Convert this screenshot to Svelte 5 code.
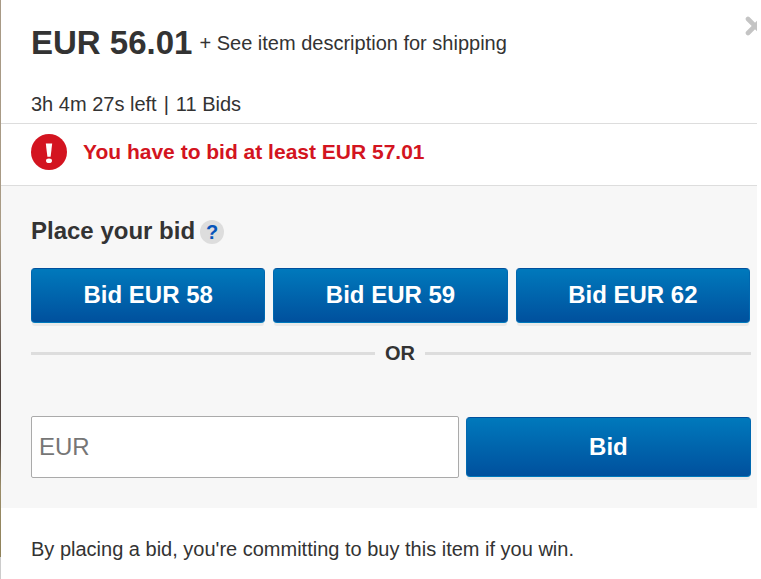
<script lang="ts">
	const currency = 'EUR';
	const quickBids = [58, 59, 62];

	let amount = '';
</script>

<main class="bid-layer">
	<header class="summary">
		<button class="close" type="button" aria-label="Close">
			<svg width="12" height="20" viewBox="0 0 12 20" aria-hidden="true">
				<path d="M3 3 17 17M17 3 3 17" stroke="#c4c4c4" stroke-width="4.6" stroke-linecap="round" />
			</svg>
		</button>
		<p class="price-row">
			<strong class="price">{currency} 56.01</strong>
			<span>+ See item description for shipping</span>
		</p>
		<p class="status">
			<span>3h 4m 27s left</span><span>|</span><span>11 Bids</span>
		</p>
	</header>

	<div class="error" role="alert">
		<svg width="36" height="36" viewBox="0 0 36 36" aria-hidden="true">
			<circle cx="18" cy="18" r="18" fill="#d31420" />
			<path d="M14.8 9.6h6.4l-1.6 13.2h-3.2z" fill="#fff" />
			<ellipse cx="18" cy="26.8" rx="3" ry="2.3" fill="#fff" />
		</svg>
		<span>You have to bid at least {currency} 57.01</span>
	</div>

	<section class="panel">
		<div class="heading">
			<h1>Place your bid</h1>
			<button class="help" type="button" aria-label="Help with placing a bid">?</button>
		</div>
		<div class="quick-bids">
			{#each quickBids as bid}
				<button class="bid-button" type="button">Bid {currency} {bid}</button>
			{/each}
		</div>
		<div class="divider">OR</div>
		<form class="custom-bid" on:submit|preventDefault>
			<input type="text" aria-label="Your bid in {currency}" placeholder={currency} bind:value={amount} />
			<button class="bid-button" type="submit">Bid</button>
		</form>
	</section>

	<p class="terms">By placing a bid, you're committing to buy this item if you win.</p>
</main>

<style>
	:global(body) {
		margin: 0;
		background: #fff;
	}

	.bid-layer {
		box-sizing: border-box;
		min-height: 100vh;
		margin-right: 4px;
		border-left: 1px solid;
		border-image: linear-gradient(#a89a86 0%, #a99b85 40%, #86786b 52%, #51443f 66%, #51443f 76%, #9a8c68 84%, #8f8259 96%, #ccc 96%) 1;
		color: #333;
		font: 20px/24px "Liberation Sans", Arial, sans-serif;
	}

	p,
	h1 {
		margin: 0;
	}

	button,
	input {
		box-sizing: border-box;
		font-family: inherit;
	}

	.summary {
		position: relative;
		padding: 24px 6px 7px 30px;
		border-bottom: 1px solid #ddd;
	}

	.close {
		position: absolute;
		top: 16px;
		right: 0;
		padding: 0;
		border: 0;
		background: none;
		cursor: pointer;
	}

	.close svg {
		display: block;
	}

	.price-row {
		display: flex;
		align-items: center;
		gap: 7px;
		margin-bottom: 30px;
	}

	.price {
		font-size: 33px;
		line-height: 38px;
	}

	.status {
		display: flex;
		gap: 7px;
	}

	.error {
		display: flex;
		align-items: center;
		gap: 16px;
		padding: 10px 6px 15px 30px;
		border-bottom: 1px solid #ddd;
		color: #d31420;
		font-size: 21px;
		font-weight: bold;
	}

	.panel {
		padding: 32px 6px 30px 30px;
		background: #f7f7f7;
	}

	.heading {
		display: flex;
		align-items: flex-end;
		gap: 5px;
		margin-bottom: 24px;
	}

	h1 {
		font-size: 24px;
		line-height: 26px;
	}

	.help {
		width: 24px;
		height: 24px;
		padding: 0;
		border: 0;
		border-radius: 50%;
		background: #ddd;
		color: #0654ba;
		font-size: 20px;
		font-weight: bold;
		line-height: 24px;
	}

	.quick-bids {
		display: grid;
		grid-template-columns: repeat(3, 1fr);
		gap: 8px;
		margin: 0 1px 18px 0;
	}

	.bid-button {
		height: 55px;
		padding: 0 0 2px;
		border: 1px solid;
		border-color: #00509d #0068b0 #0079bc;
		border-radius: 4px;
		background: linear-gradient(#0079bc, #00509d);
		box-shadow: 0 4px 0 -1px #eaeaea;
		color: #fff;
		font-size: 24px;
		font-weight: bold;
		cursor: pointer;
	}

	.divider {
		display: flex;
		align-items: center;
		gap: 10px;
		margin-bottom: 51px;
		font-weight: bold;
	}

	.divider::before,
	.divider::after {
		content: '';
		flex: 18;
		height: 3px;
		background: #ddd;
	}

	.divider::before {
		flex: 19;
	}

	.custom-bid {
		display: grid;
		grid-template-columns: 3fr 2fr;
		align-items: center;
		gap: 7px;
	}

	.custom-bid input {
		height: 62px;
		min-width: 0;
		padding: 0 7px;
		border: 1px solid #aaa;
		border-radius: 2px;
		background: #fff;
		color: #333;
		font-size: 24px;
	}

	.custom-bid input::placeholder {
		color: #767676;
	}

	.custom-bid .bid-button {
		height: 60px;
		padding: 0;
	}

	.terms {
		padding: 29px 6px 16px 30px;
	}
</style>
